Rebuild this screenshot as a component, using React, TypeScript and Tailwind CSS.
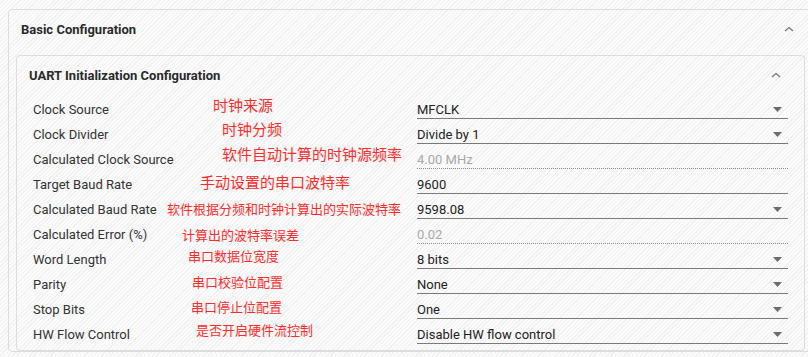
import React from "react";

type Row = {
  label: string;
  value: string;
  kind: "select" | "input" | "readonly";
};

const rows: Row[] = [
  { label: "Clock Source", value: "MFCLK", kind: "select" },
  { label: "Clock Divider", value: "Divide by 1", kind: "select" },
  { label: "Calculated Clock Source", value: "4.00 MHz", kind: "readonly" },
  { label: "Target Baud Rate", value: "9600", kind: "input" },
  { label: "Calculated Baud Rate", value: "9598.08", kind: "select" },
  { label: "Calculated Error (%)", value: "0.02", kind: "readonly" },
  { label: "Word Length", value: "8 bits", kind: "select" },
  { label: "Parity", value: "None", kind: "select" },
  { label: "Stop Bits", value: "One", kind: "select" },
  { label: "HW Flow Control", value: "Disable HW flow control", kind: "select" },
];

// red notes drawn on top of the screenshot
const notes = [
  { text: "时钟来源", x: 213, y: 97, big: true },
  { text: "时钟分频", x: 222, y: 121, big: true },
  { text: "软件自动计算的时钟源频率", x: 222, y: 146, big: true },
  { text: "手动设置的串口波特率", x: 200, y: 174, big: true },
  { text: "软件根据分频和时钟计算出的实际波特率", x: 167, y: 202, big: false },
  { text: "计算出的波特率误差", x: 182, y: 228, big: false },
  { text: "串口数据位宽度", x: 188, y: 249, big: false },
  { text: "串口校验位配置", x: 192, y: 275, big: false },
  { text: "串口停止位配置", x: 191, y: 300, big: false },
  { text: "是否开启硬件流控制", x: 196, y: 323, big: false },
];

function ChevronUp() {
  return (
    <svg width="10" height="6" viewBox="0 0 10 6" className="block">
      <path d="M1 5 L5 1.5 L9 5" fill="none" stroke="#777" strokeWidth="1.3" />
    </svg>
  );
}

function Caret() {
  return (
    <svg width="9" height="5" viewBox="0 0 9 5" className="block">
      <path d="M0 0 H9 L4.5 5 Z" fill="#6b6b6b" />
    </svg>
  );
}

function Field({ row }: { row: Row }) {
  const line =
    row.kind === "readonly"
      ? "border-b border-dotted border-[#8a8a8a]"
      : "border-b border-[#7a7a7a]";
  const color = row.kind === "readonly" ? "text-[#a9a9a9]" : "text-[#222]";
  return (
    <div className={`flex h-[19px] items-center justify-between ${line}`}>
      <span className={`text-[13px] leading-none ${color}`}>{row.value}</span>
      {row.kind === "select" && (
        <span className="mr-[6px]">
          <Caret />
        </span>
      )}
    </div>
  );
}

export default function App() {
  return (
    <div
      className="relative h-[357px] w-[808px] overflow-hidden bg-[repeating-linear-gradient(135deg,#fbfbfb_0px,#fbfbfb_2px,#f1f1f1_2px,#f1f1f1_3px)] pl-[8px] pt-[9px]"
      style={{ fontFamily: "Roboto, 'Liberation Sans', sans-serif" }}
    >
      <div className="w-[830px] rounded-[4px] border border-[#dddddd]">
        <div className="flex h-[40px] items-center justify-between pl-[12px] pr-[43px]">
          <span className="text-[13px] font-bold text-[#2a2a2a]">Basic Configuration</span>
          <span className="-mt-[3px]">
            <ChevronUp />
          </span>
        </div>

        <div className="ml-[7px] mt-[5px] w-[789px] rounded-[4px] border border-[#dddddd] pb-[6px]">
          <div className="flex h-[40px] items-center justify-between pl-[12px] pr-[23px]">
            <span className="text-[13px] font-bold text-[#2a2a2a]">
              UART Initialization Configuration
            </span>
            <span className="-mt-[3px]">
              <ChevronUp />
            </span>
          </div>

          <div className="flex flex-col gap-[6px] px-[16px] pt-[4px]">
            {rows.map((row) => (
              <div key={row.label} className="grid grid-cols-[384px_1fr]">
                <div className="flex h-[19px] items-center text-[13px] leading-none text-[#333]">
                  {row.label}
                </div>
                <Field row={row} />
              </div>
            ))}
          </div>
        </div>
      </div>

      {notes.map((n) => (
        <div
          key={n.text}
          className={`absolute whitespace-nowrap leading-none text-[#ff2a2a] ${
            n.big ? "text-[15px]" : "text-[13px]"
          }`}
          style={{
            left: n.x,
            top: n.y,
            fontFamily: "'Noto Sans CJK SC', sans-serif",
          }}
        >
          {n.text}
        </div>
      ))}
    </div>
  );
}
